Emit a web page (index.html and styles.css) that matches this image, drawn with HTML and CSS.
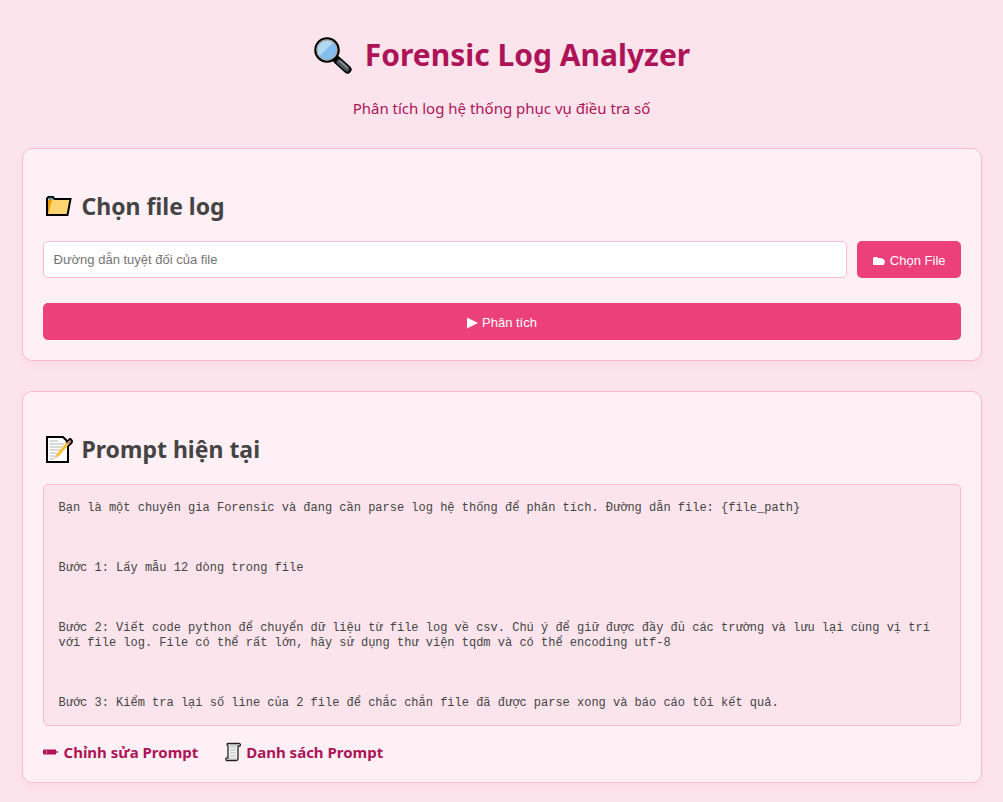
FILE: index.html
```
<!DOCTYPE html>
<html lang="vi">
<head>
<meta charset="utf-8">
<meta name="viewport" content="width=device-width, initial-scale=1">
<title>Forensic Log Analyzer</title>
<link rel="stylesheet" href="styles.css">
</head>
<body>
<div class="container">
  <header class="header">
    <h1 class="title">
      <svg class="icon-search" viewBox="0 -1 40 40" aria-hidden="true">
        <path d="M24 24 34.500 33.500" stroke="#000" stroke-width="8" stroke-linecap="round"/>
        <path d="M21 21 26 26" stroke="#000" stroke-width="4"/>
        <path d="M26 26 34 33" stroke="#4b555b" stroke-width="5" stroke-linecap="round"/>
        <path d="M27 25 34 31.500" stroke="#82898d" stroke-width="2" stroke-linecap="round"/>
        <circle cx="14" cy="14" r="11.500" fill="#83bfee" stroke="#000" stroke-width="2.500"/>
        <path d="M6.500 20A9.500 9.500 0 0 1 20 6.500Z" fill="#b1d9f2"/>
        <circle cx="14" cy="14" r="10" fill="none" stroke="#a8a8a8" stroke-width="1.300"/>
      </svg>
      <span>Forensic Log Analyzer</span>
    </h1>
    <p class="subtitle">Phân tích log hệ thống phục vụ điều tra số</p>
  </header>
  <main class="main">
    <section class="card">
      <h2 class="heading">
        <svg class="icon-heading" viewBox="-1 -1 30 30" aria-hidden="true">
          <path d="M3 6.500 4.500 5H9L10.500 7H26.500L23.500 23H3V7Z" fill="#ffd36f" stroke="#000" stroke-width="2"/>
          <path d="M4 8H8L4.500 21H4Z" fill="#e99d00"/>
          <path d="M4.500 7 5 5.500H8.500L10 7.500H5Z" fill="#3e82ac"/>
        </svg>
        <span>Chọn file log</span>
      </h2>
      <form class="form">
        <div class="file-row">
          <input class="path-input" type="text" aria-label="Đường dẫn tuyệt đối của file" placeholder="Đường dẫn tuyệt đối của file">
          <button class="button" type="button">
            <svg class="icon-folder" viewBox="0 0 14 12" aria-hidden="true"><path d="M1 10V3L2 2H5L6 3H9.500L10.500 4H12V5L13 6 12 10Z" fill="currentColor"/></svg>
            <span>Chọn File</span>
          </button>
        </div>
        <button class="button" type="button">
          <svg class="icon-play" viewBox="0 0 12 12" aria-hidden="true"><path d="M1 0.500V11.500L12 6Z" fill="currentColor"/></svg>
          <span>Phân tích</span>
        </button>
      </form>
    </section>
    <section class="card">
      <h2 class="heading">
        <svg class="icon-heading" viewBox="-1 -1 30 30" aria-hidden="true">
          <path d="M3 2H19L24 7V27H3Z" fill="#fff" stroke="#000" stroke-width="2"/>
          <path d="M5.500 6H14M5.500 9H20M5.500 12H18M5.500 15H16M5.500 18H13M5.500 21H11M5.500 24H10" stroke="#b5b5b5"/>
          <path d="M22 8 25 5Q26 3 27.500 5T26.500 9L24 11" fill="#c58b81" stroke="#000" stroke-width="1.800"/>
          <path d="M13 21 24 8" stroke="#fbc02d" stroke-width="3"/>
          <path d="M10 24 12 19.500 14.500 22Z" fill="#efc3a2"/>
          <path d="M23.500 9 26 6" stroke="#ad8b88" stroke-width="2.500"/>
        </svg>
        <span>Prompt hiện tại</span>
      </h2>
      <pre class="prompt">Bạn là một chuyên gia Forensic và đang cần parse log hệ thống để phân tích. Đường dẫn file: {file_path}



Bước 1: Lấy mẫu 12 dòng trong file



Bước 2: Viết code python để chuyển dữ liệu từ file log về csv. Chú ý để giữ được đầy đủ các trường và lưu lại cùng vị trí với file log. File có thể rất lớn, hãy sử dụng thư viện tqdm và có thể encoding utf-8



Bước 3: Kiểm tra lại số line của 2 file để chắc chắn file đã được parse xong và báo cáo tôi kết quả.</pre>
      <nav class="links">
        <a class="link" href="#edit">
          <svg class="icon-link" viewBox="0 0 16 20" aria-hidden="true"><path d="M1 7.500H13V9L16 10 13 11V12.500H1L0 11.500V8.500Z" fill="currentColor"/><path d="M3.500 7.500V12.500" stroke="#d76d99"/></svg>
          <span>Chỉnh sửa Prompt</span>
        </a>
        <a class="link" href="#list">
          <svg class="icon-link" viewBox="0 0 16 20" aria-hidden="true">
            <path d="M3 1.500H14.500Q16 2 15 4H13V16Q13 18.500 11 18.500H1.500Q0 17 1.500 16H3V4Q1 2 3 1.500Z" fill="#f2f3f3" stroke="#222" stroke-width="1.300"/>
            <path d="M5 5H11M5 8H11M5 11H11M5 14H11" stroke="#b7b9bb"/>
            <path d="M2 17H11M4 3H14" stroke="#aaa"/>
          </svg>
          <span>Danh sách Prompt</span>
        </a>
      </nav>
    </section>
  </main>
</div>
</body>
</html>
```
FILE: styles.css
```
* {
  box-sizing: border-box;
}

body {
  margin: 0;
  padding: 20px;
  background: #fce4ec;
  color: #444;
  font-family: "Noto Sans", "Open Sans", sans-serif;
}

.container {
  max-width: 960px;
  margin: 0 auto;
}

.header {
  padding-top: 13px;
  margin-bottom: 29px;
  text-align: center;
  color: #ad1457;
}

.title {
  display: flex;
  align-items: center;
  justify-content: center;
  gap: 12px;
  margin: 0 0 21px;
  font-size: 30px;
  line-height: 44px;
}

.icon-search {
  width: 40px;
  height: 40px;
}

.subtitle {
  margin: 0;
  font-size: 15px;
  line-height: 21px;
}

.main {
  display: grid;
  gap: 30px;
}

.card {
  min-width: 0;
  padding: 20px;
  border: 1px solid #f8bbd0;
  border-radius: 10px;
  background: #fff0f5;
  box-shadow: 0 4px 8px rgba(236, 64, 122, 0.05);
}

.heading {
  display: flex;
  align-items: center;
  gap: 9px;
  margin: 20px 0 18px;
  font-size: 23px;
  line-height: 34px;
}

.icon-heading {
  width: 30px;
  height: 30px;
}

.form {
  display: grid;
  gap: 25px;
}

.file-row {
  display: flex;
  gap: 10px;
}

.path-input {
  flex: 1;
  min-width: 0;
  height: 37px;
  padding: 0 10px;
  border: 1px solid #f8bbd0;
  border-radius: 5px;
  background: #fff;
  color: #444;
  font: 13px "Liberation Sans", Arial, sans-serif;
}

.path-input::placeholder {
  color: #757575;
}

.button {
  display: flex;
  align-items: center;
  justify-content: center;
  gap: 4px;
  height: 37px;
  padding: 2px 15px 0;
  border: 0;
  border-radius: 5px;
  background: #ec407a;
  color: #fff;
  font: 13px "Liberation Sans", Arial, sans-serif;
  cursor: pointer;
}

.icon-folder {
  width: 14px;
  height: 12px;
}

.icon-play {
  width: 12px;
  height: 12px;
}

.prompt {
  margin: 0 0 16px;
  padding: 16px 15px 14px;
  border: 1px solid #f8bbd0;
  border-radius: 5px;
  background: #fce4ec;
  font: 12px/15px "Liberation Mono", "DejaVu Sans Mono", monospace;
  white-space: pre-wrap;
}

.links {
  display: flex;
  flex-wrap: wrap;
  gap: 27px;
}

.link {
  display: flex;
  align-items: center;
  gap: 5px;
  color: #ad1457;
  font-size: 15px;
  font-weight: 700;
  line-height: 20px;
  text-decoration: none;
}

.icon-link {
  width: 16px;
  height: 20px;
}
```
